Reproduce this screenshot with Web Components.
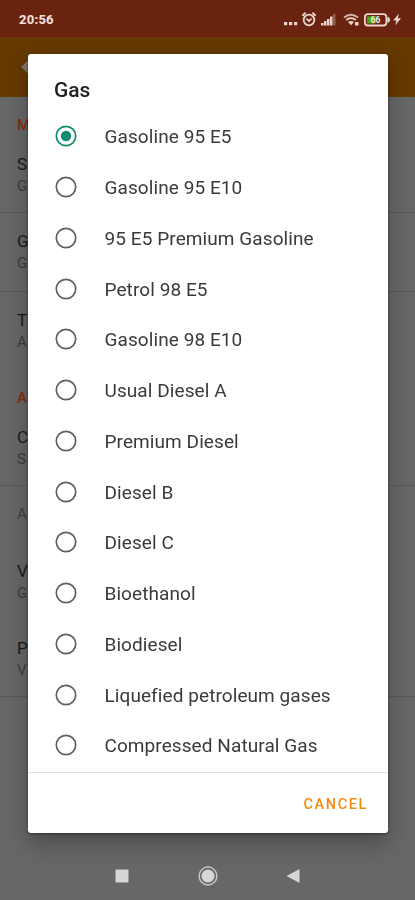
<!DOCTYPE html>
<html lang="en">
<head>
<meta charset="utf-8">
<meta name="viewport" content="width=device-width, initial-scale=1">
<title>Gas</title>
<style>
    body {
        margin: 0;
        font-family: Roboto, "Liberation Sans", sans-serif;
        background: #676767;
        overflow: hidden;
    }
</style>
</head>
<body>
<phone-screen>
    <status-bar slot="status" time="20:56"></status-bar>
    <app-bar slot="bar"></app-bar>

    <settings-group label="M">
        <settings-row label="S" value="G" style="height: 75px" line></settings-row>
        <settings-row label="G" value="G" style="height: 79px" line></settings-row>
        <settings-row label="T" value="A" style="height: 78px"></settings-row>
    </settings-group>
    <settings-group label="A">
        <settings-row label="C" value="S" style="height: 75px" line></settings-row>
        <settings-row value="A" style="height: 57px"></settings-row>
        <settings-row label="V" value="G" style="height: 79px"></settings-row>
        <settings-row label="P" value="V" style="height: 75px" line></settings-row>
    </settings-group>

    <nav-bar slot="nav"></nav-bar>

    <choice-dialog slot="dialog">
        <span slot="title">Gas</span>
        <radio-item checked>Gasoline 95 E5</radio-item>
        <radio-item>Gasoline 95 E10</radio-item>
        <radio-item>95 E5 Premium Gasoline</radio-item>
        <radio-item>Petrol 98 E5</radio-item>
        <radio-item>Gasoline 98 E10</radio-item>
        <radio-item>Usual Diesel A</radio-item>
        <radio-item>Premium Diesel</radio-item>
        <radio-item>Diesel B</radio-item>
        <radio-item>Diesel C</radio-item>
        <radio-item>Bioethanol</radio-item>
        <radio-item>Biodiesel</radio-item>
        <radio-item>Liquefied petroleum gases</radio-item>
        <radio-item>Compressed Natural Gas</radio-item>
        <span slot="action">CANCEL</span>
    </choice-dialog>
</phone-screen>

<script>
class PhoneScreen extends HTMLElement {
    constructor(){
        super();
        this.attachShadow({mode: 'open'});
        this.shadowRoot.innerHTML = `
            <style>
                :host {
                    display: flex;
                    flex-direction: column;
                    height: 900px;
                    overflow: hidden;
                }
                main {
                    flex: 1;
                    min-height: 0;
                }
            </style>
            <slot name="status"></slot>
            <slot name="bar"></slot>
            <main><slot></slot></main>
            <slot name="nav"></slot>
            <slot name="dialog"></slot>
        `;
    }
}

class StatusBar extends HTMLElement {
    constructor(){
        super();
        this.attachShadow({mode: 'open'});
        this.shadowRoot.innerHTML = `
            <style>
                :host {
                    display: flex;
                    align-items: center;
                    justify-content: space-between;
                    box-sizing: border-box;
                    height: 37px;
                    padding: 2px 13px 0 19px;
                    background: #69230f;
                    color: #f3dfda;
                    font-size: 13px;
                    font-weight: 800;
                    letter-spacing: 0.2px;
                }
                svg {
                    display: block;
                    letter-spacing: 0;
                }
            </style>
            <span id="time"></span>
            <svg width="120" height="18" viewBox="0 0 120 18" fill="#ecd5cf">
                <!-- more notifications -->
                <rect x="2" y="11" width="3.200" height="3.200"/>
                <rect x="7" y="11" width="3.200" height="3.200"/>
                <rect x="12" y="11" width="3.200" height="3.200"/>
                <!-- alarm -->
                <g fill="none" stroke="#ecd5cf" stroke-width="1.800" stroke-linecap="round">
                    <circle cx="27" cy="9" r="5.300"/>
                    <path d="M25 8.200l2 2 2-2"/>
                    <path d="M21 4.200l2-1.900M33 4.200l-2-1.900" stroke-width="2"/>
                </g>
                <!-- signal -->
                <rect x="39" y="12" width="2.500" height="2.500"/>
                <rect x="42" y="10" width="2.500" height="4.500"/>
                <rect x="45" y="8" width="2.500" height="6.500"/>
                <rect x="48" y="5.500" width="2.500" height="9"/>
                <rect x="51" y="3" width="2.500" height="11.500" opacity=".35"/>
                <!-- wifi -->
                <g fill="none" stroke="#ecd5cf" stroke-width="1.800">
                    <path d="M62 6.500q7-5.500 14 0" opacity=".8"/>
                    <path d="M64.300 9q4.700-3.800 9.400 0"/>
                </g>
                <path d="M66 11q3-2.200 6 0l-3 3.200z"/>
                <rect x="73" y="11" width="3.500" height="3.500" rx=".6"/>
                <!-- battery -->
                <rect x="82.900" y="3.200" width="21.500" height="11.300" rx="3" fill="none" stroke="#ecd5cf" stroke-width="1.800"/>
                <path d="M105.300 6q2.700 0 2.700 2.800t-2.700 2.800z"/>
                <path d="M85 5.300h11l-2.500 7.100h-8.500z" fill="#4ca513"/>
                <text x="88.500" y="12" font-size="8.500" font-weight="700" fill="#f2eee2">66</text>
                <path d="M117 2.600l-5.800 7h3.200l-1.200 4.900 5.800-7.200h-3.200z"/>
            </svg>
        `;
    }

    connectedCallback(){
        this.shadowRoot.querySelector('#time').textContent = this.getAttribute('time');
    }
}

class AppBar extends HTMLElement {
    constructor(){
        super();
        this.attachShadow({mode: 'open'});
        this.shadowRoot.innerHTML = `
            <style>
                :host {
                    display: flex;
                    align-items: center;
                    box-sizing: border-box;
                    height: 60px;
                    padding-left: 21px;
                    background: #653900;
                }
            </style>
            <svg width="18" height="16" viewBox="0 0 18 16" fill="none" stroke="#80746a" stroke-width="2.800">
                <path d="M8.500 2l-6.500 6 6.500 6M2 8h16"/>
            </svg>
        `;
    }
}

class SettingsGroup extends HTMLElement {
    constructor(){
        super();
        this.attachShadow({mode: 'open'});
        this.shadowRoot.innerHTML = `
            <style>
                :host {
                    display: block;
                }
                h2 {
                    box-sizing: border-box;
                    height: 41px;
                    margin: 0;
                    padding: 18px 0 0 17px;
                    font-size: 15px;
                    line-height: 20px;
                    font-weight: 500;
                    color: #852c0f;
                }
            </style>
            <h2></h2>
            <slot></slot>
        `;
    }

    connectedCallback(){
        this.shadowRoot.querySelector('h2').textContent = this.getAttribute('label');
    }
}

class SettingsRow extends HTMLElement {
    constructor(){
        super();
        this.attachShadow({mode: 'open'});
        this.shadowRoot.innerHTML = `
            <style>
                :host {
                    display: flex;
                    flex-direction: column;
                    justify-content: center;
                    box-sizing: border-box;
                    padding: 0 0 1px 17px;
                    line-height: 22px;
                }
                :host([line]) {
                    border-bottom: 1px solid #595959;
                }
                #label {
                    font-size: 17px;
                    color: #191919;
                }
                #value {
                    font-size: 15px;
                    color: #3d3d3d;
                }
                #label:empty {
                    display: none;
                }
            </style>
            <div id="label"></div>
            <div id="value"></div>
        `;
    }

    connectedCallback(){
        this.shadowRoot.querySelector('#label').textContent = this.getAttribute('label') || '';
        this.shadowRoot.querySelector('#value').textContent = this.getAttribute('value') || '';
    }
}

class NavBar extends HTMLElement {
    constructor(){
        super();
        this.attachShadow({mode: 'open'});
        this.shadowRoot.innerHTML = `
            <style>
                :host {
                    display: flex;
                    align-items: center;
                    justify-content: center;
                    height: 49px;
                }
            </style>
            <svg width="188" height="22" viewBox="0 0 188 22" fill="#d6d6d6">
                <rect x="1.500" y="4.500" width="13" height="13" rx="1"/>
                <circle cx="94" cy="11" r="6.500"/>
                <circle cx="94" cy="11" r="8.900" fill="none" stroke="#c4c4c4" stroke-width="1.500"/>
                <path d="M172.500 11L185.500 4v14z"/>
            </svg>
        `;
    }
}

class ChoiceDialog extends HTMLElement {
    constructor(){
        super();
        this.attachShadow({mode: 'open'});
        this.shadowRoot.innerHTML = `
            <style>
                :host {
                    position: fixed;
                    top: 54px;
                    left: 28px;
                    width: 360px;
                    height: 779px;
                    display: flex;
                    flex-direction: column;
                    background: white;
                    border-radius: 3px;
                    box-shadow: 0 1px 3px rgba(0, 0, 0, 0.4), 0 10px 22px rgba(0, 0, 0, 0.28);
                }
                header {
                    box-sizing: border-box;
                    height: 57px;
                    padding: 22px 26px 0;
                    font-size: 21px;
                    line-height: 28px;
                    font-weight: 500;
                    color: #222;
                }
                #list {
                    flex: 1;
                }
                footer {
                    display: flex;
                    align-items: center;
                    justify-content: flex-end;
                    box-sizing: border-box;
                    height: 61px;
                    padding: 2px 20px 0 0;
                    border-top: 1px solid #e0e0e0;
                }
                button {
                    padding: 0;
                    border: 0;
                    background: none;
                    font: 500 14.500px Roboto, "Liberation Sans", sans-serif;
                    letter-spacing: 1.600px;
                    color: #f28c13;
                }
            </style>
            <header><slot name="title"></slot></header>
            <div id="list"><slot></slot></div>
            <footer><button><slot name="action"></slot></button></footer>
        `;
    }
}

class RadioItem extends HTMLElement {
    constructor(){
        super();
        this.attachShadow({mode: 'open'});
        this.shadowRoot.innerHTML = `
            <style>
                :host {
                    display: flex;
                    align-items: center;
                    gap: 27.500px;
                    height: 50.750px;
                    padding-left: 27px;
                    font-size: 19px;
                    letter-spacing: 0.080px;
                    color: #3a3a3a;
                    white-space: nowrap;
                }
                svg {
                    flex: none;
                    color: #606060;
                }
                span {
                    padding-top: 1px;
                }
                #dot {
                    display: none;
                }
                :host([checked]) svg {
                    color: #0f8b70;
                }
                :host([checked]) #dot {
                    display: inline;
                }
            </style>
            <svg width="22" height="22" viewBox="0 0 22 22">
                <circle cx="11" cy="11" r="9.700" fill="none" stroke="currentColor" stroke-width="1.700"/>
                <circle id="dot" cx="11" cy="11" r="5.200" fill="currentColor"/>
            </svg>
            <span><slot></slot></span>
        `;
        this.addEventListener('click', this._select.bind(this));
    }

    _select(){
        this.parentElement.querySelectorAll('radio-item').forEach(item => item.removeAttribute('checked'));
        this.setAttribute('checked', '');
    }
}

customElements.define('phone-screen', PhoneScreen);
customElements.define('status-bar', StatusBar);
customElements.define('app-bar', AppBar);
customElements.define('settings-group', SettingsGroup);
customElements.define('settings-row', SettingsRow);
customElements.define('nav-bar', NavBar);
customElements.define('choice-dialog', ChoiceDialog);
customElements.define('radio-item', RadioItem);
</script>
</body>
</html>
